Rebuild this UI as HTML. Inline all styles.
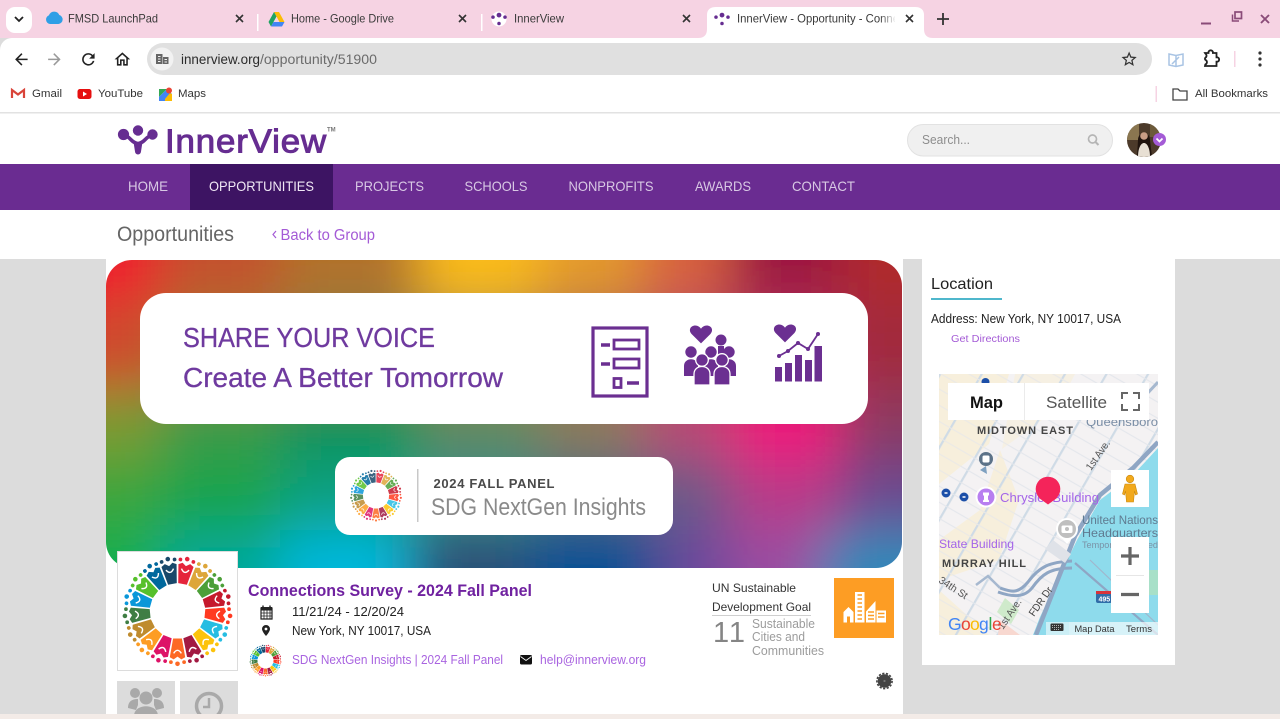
<!DOCTYPE html>
<html lang="en">
<head>
<meta charset="utf-8">
<title>InnerView - Opportunity - Connections Survey</title>
<style>
html,body{margin:0;padding:0;width:1280px;height:719px;overflow:hidden;background:#dcdcdc}
svg{display:block;font-family:"Liberation Sans",Arial,sans-serif}
</style>
</head>
<body>
<svg xmlns="http://www.w3.org/2000/svg" xmlns:xlink="http://www.w3.org/1999/xlink" width="1280" height="719" viewBox="0 0 1280 719">
<defs>
  <filter id="b1" filterUnits="userSpaceOnUse" x="0" y="150" width="1040" height="530"><feGaussianBlur stdDeviation="26"/></filter>
  <clipPath id="bannerClip"><path d="M106 286a26 26 0 0 1 26-26h744a26 26 0 0 1 26 26v256a26 26 0 0 1-26 26H132a26 26 0 0 1-26-26z"/></clipPath>
  <clipPath id="mapClip"><rect x="939" y="374" width="219" height="261"/></clipPath>
  <clipPath id="tabClip"><rect x="737" y="8" width="158" height="20"/></clipPath>
  <clipPath id="btnClip"><rect x="117" y="681" width="121" height="33"/></clipPath>
  <clipPath id="avClip"><circle cx="1144" cy="140" r="17"/></clipPath>
  <linearGradient id="fade"><stop offset="0" stop-color="#fff" stop-opacity="0"/><stop offset="1" stop-color="#fff"/></linearGradient>
  <pattern id="streets" width="14" height="36" patternUnits="userSpaceOnUse" patternTransform="translate(939 374) rotate(-60)">
    <rect width="14" height="36" fill="#f4f2f3"/>
    <path d="M0 1H14" stroke="#cfdbe6" stroke-width="2.400"/>
    <path d="M1 0V36" stroke="#e4e7ec" stroke-width="1.100"/>
  </pattern>
  <pattern id="blocks" width="14" height="36" patternUnits="userSpaceOnUse" patternTransform="translate(939 374) rotate(-60)">
    <rect width="14" height="36" fill="#f7efdc"/>
    <path d="M0 1H14" stroke="#cfdbe6" stroke-width="2.400"/>
    <path d="M1 0V36" stroke="#ebe9e6" stroke-width="1.100"/>
  </pattern>
  <g id="wedge">
    <path d="M-4-25 L4-25 L7-42 L3.500-44 L0-41.500 L-3.500-44 L-7-42Z"/>
    <path d="M-3.500-38.500Q0-33 3.500-38.500" fill="none" stroke="#fff" stroke-width="1.300"/>
    <circle cx="0" cy="-48" r="2.100"/><circle cx="-6" cy="-46.500" r="1.700"/><circle cx="6" cy="-46.500" r="1.700"/>
  </g>
  <g id="wheel">
    <use xlink:href="#wedge" href="#wedge" fill="#e5243b" transform="rotate(10.6)"/>
    <use xlink:href="#wedge" href="#wedge" fill="#dda63a" transform="rotate(31.8)"/>
    <use xlink:href="#wedge" href="#wedge" fill="#4c9f38" transform="rotate(53)"/>
    <use xlink:href="#wedge" href="#wedge" fill="#c5192d" transform="rotate(74.1)"/>
    <use xlink:href="#wedge" href="#wedge" fill="#ff3a21" transform="rotate(95.3)"/>
    <use xlink:href="#wedge" href="#wedge" fill="#26bde2" transform="rotate(116.5)"/>
    <use xlink:href="#wedge" href="#wedge" fill="#fcc30b" transform="rotate(137.6)"/>
    <use xlink:href="#wedge" href="#wedge" fill="#a21942" transform="rotate(158.8)"/>
    <use xlink:href="#wedge" href="#wedge" fill="#fd6925" transform="rotate(180)"/>
    <use xlink:href="#wedge" href="#wedge" fill="#dd1367" transform="rotate(201.2)"/>
    <use xlink:href="#wedge" href="#wedge" fill="#fd9d24" transform="rotate(222.4)"/>
    <use xlink:href="#wedge" href="#wedge" fill="#bf8b2e" transform="rotate(243.5)"/>
    <use xlink:href="#wedge" href="#wedge" fill="#3f7e44" transform="rotate(264.7)"/>
    <use xlink:href="#wedge" href="#wedge" fill="#0a97d9" transform="rotate(285.9)"/>
    <use xlink:href="#wedge" href="#wedge" fill="#56c02b" transform="rotate(307)"/>
    <use xlink:href="#wedge" href="#wedge" fill="#00689d" transform="rotate(328.2)"/>
    <use xlink:href="#wedge" href="#wedge" fill="#19486a" transform="rotate(349.4)"/>
  </g>
  <g id="ivmark" fill="#662d91">
    <circle cx="0" cy="-5.500" r="3"/><circle cx="-7.500" cy="-3" r="2.200"/><circle cx="7.500" cy="-3" r="2.200"/><circle cx="0" cy="5" r="2.200"/>
  </g>
  <path id="heart" d="M0 8 L-9-1 C-12.500-5-9.500-9-5.500-9 C-3-9-1-7.500 0-6 C1-7.500 3-9 5.500-9 C9.500-9 12.500-5 9-1Z"/>
</defs>

<!-- page background -->
<rect width="1280" height="719" fill="#dcdcdc"/>

<!-- browser tab strip -->
<rect width="1280" height="38" fill="#f6d3e3"/>
<rect x="6" y="7" width="26" height="26" rx="9" fill="#fff"/>
<path d="M15 17l4 4 4-4" fill="none" stroke="#222" stroke-width="1.800"/>
<path d="M50 24a4.500 4.500 0 0 1-1-8.700 5.500 5.500 0 0 1 10.300-.3A4.600 4.600 0 0 1 58.500 24z" fill="#2f9fe6"/>
<text x="68" y="22.500" font-size="12" fill="#3a3a3a" textLength="90" lengthAdjust="spacingAndGlyphs">FMSD LaunchPad</text>
<path d="M236 15l7 7m0-7l-7 7" stroke="#333" stroke-width="1.600"/>
<rect x="257" y="14" width="1.500" height="17" fill="#fff"/>
<path d="M274 12h5l5.500 10h-5z" fill="#fbbc04"/><path d="M274 12l-5.500 10 2.500 4.500 5.500-10z" fill="#1ea362"/><path d="M271 26.500h11l2.500-4.500h-11z" fill="#4285f4"/>
<text x="291" y="22.500" font-size="12" fill="#3a3a3a" textLength="103" lengthAdjust="spacingAndGlyphs">Home - Google Drive</text>
<path d="M459 15l7 7m0-7l-7 7" stroke="#333" stroke-width="1.600"/>
<rect x="481" y="14" width="1.500" height="17" fill="#fff"/>
<circle cx="499" cy="19" r="7.500" fill="#fff"/>
<use xlink:href="#ivmark" href="#ivmark" transform="translate(499 19.500) scale(.8)"/>
<text x="514" y="22.500" font-size="12" fill="#3a3a3a" textLength="50" lengthAdjust="spacingAndGlyphs">InnerView</text>
<path d="M683 15l7 7m0-7l-7 7" stroke="#333" stroke-width="1.600"/>

<!-- active tab -->
<path d="M698 38c6 0 9-3 9-9V15c0-6 4-8 9-8h199c6 0 9 3 9 8v14c0 6 3 9 9 9z" fill="#fff"/>
<use xlink:href="#ivmark" href="#ivmark" transform="translate(722 19.500) scale(.8)"/>
<text x="737" y="22.500" font-size="12" fill="#3a3a3a" clip-path="url(#tabClip)" textLength="162" lengthAdjust="spacingAndGlyphs">InnerView - Opportunity - Conne</text>
<rect x="880" y="8" width="16" height="20" fill="url(#fade)"/>
<path d="M906 15l7 7m0-7l-7 7" stroke="#333" stroke-width="1.600"/>
<path d="M943 13v12m-6-6h12" stroke="#333" stroke-width="1.800"/>
<!-- window controls -->
<path d="M1201 23.500h10" stroke="#8a4b78" stroke-width="2"/>
<path d="M1232.500 14.500v6.500h6.500" fill="none" stroke="#8a4b78" stroke-width="1.500"/>
<rect x="1235" y="12" width="6.500" height="6.500" fill="none" stroke="#8a4b78" stroke-width="1.700"/>
<path d="M1261 15l8 8m0-8l-8 8" stroke="#8a4b78" stroke-width="1.900"/>

<!-- toolbar -->
<path d="M0 50a12 12 0 0 1 12-12h1268v75H0z" fill="#fff"/>
<g transform="translate(12 50) scale(.78)" fill="#222"><path d="M20 11H7.830l5.590-5.590L12 4l-8 8 8 8 1.410-1.410L7.830 13H20v-2z"/></g>
<g transform="translate(45 50) scale(.78)" fill="#9a9a9a"><path d="M12 4l-1.410 1.410L16.170 11H4v2h12.170l-5.580 5.590L12 20l8-8z"/></g>
<g transform="translate(79 50) scale(.78)" fill="#222"><path d="M17.650 6.350A7.950 7.950 0 0 0 12 4a8 8 0 1 0 7.730 10h-2.080A6 6 0 1 1 12 6c1.660 0 3.140.69 4.220 1.780L13 11h7V4l-2.350 2.350z"/></g>
<g transform="translate(113 50) scale(.78)" fill="#222"><path d="M12 5.690l5 4.500V18h-2v-6H9v6H7v-7.810l5-4.500M12 3L2 12h3v8h6v-6h2v6h6v-8h3L12 3z"/></g>
<rect x="147" y="43" width="1005" height="32" rx="16" fill="#e0e0e0"/>
<circle cx="162" cy="59" r="11.500" fill="#f2f2f2"/>
<path d="M156 54h6.500v10H156zM163 57h5.500v7H163z" fill="#666"/>
<path d="M158 56.500h2.500M158 59h2.500M158 61.500h2.500M164.500 59.500h2.500M164.500 62h2.500" stroke="#f2f2f2" stroke-width="1"/>
<text x="181" y="64" font-size="13.500" fill="#2b2b2b" textLength="79" lengthAdjust="spacingAndGlyphs">innerview.org</text>
<text x="260" y="64" font-size="13.500" fill="#6b6b6b" textLength="117" lengthAdjust="spacingAndGlyphs">/opportunity/51900</text>
<g transform="translate(1120 50) scale(.76)" fill="#333"><path d="M22 9.240l-7.190-.62L12 2 9.190 8.630 2 9.240l5.460 4.730L5.820 21 12 17.270 18.180 21l-1.630-7.030L22 9.240zM12 15.400l-3.760 2.270 1-4.280-3.320-2.880 4.380-.38L12 6.100l1.710 4.040 4.380.38-3.320 2.880 1 4.280L12 15.400z"/></g>
<path d="M1169 54l7 1.500 7-1.500v11l-7 1.500-7-1.500zM1176 55.500v11M1172 64l7-7" fill="none" stroke="#a9c4e4" stroke-width="1.500"/>
<path d="M1205 53h3.500v-.5a2.200 2.200 0 0 1 4.400 0v.5h3.600v4.300h1a2.300 2.300 0 0 1 0 4.400h-1v4.300h-11.500l.3-1.500a2.500 2.500 0 0 0 0-4.700l-.3-.6v-.8l.3-.6a2.500 2.500 0 0 0 0-4.300z" fill="none" stroke="#222" stroke-width="1.800"/>
<rect x="1234" y="51" width="1.500" height="16" fill="#f6d3e3"/>
<circle cx="1260" cy="53" r="1.600" fill="#333"/><circle cx="1260" cy="59" r="1.600" fill="#333"/><circle cx="1260" cy="65" r="1.600" fill="#333"/>

<!-- bookmarks bar -->
<path d="M12 98V90l6 4.500L24 90v8" fill="none" stroke="#d9453a" stroke-width="2.200"/>
<text x="32" y="97" font-size="11" fill="#333" textLength="30" lengthAdjust="spacingAndGlyphs">Gmail</text>
<rect x="77.500" y="89" width="14" height="10" rx="2.500" fill="#e60f0f"/><path d="M83 91.500l4 2.500-4 2.500z" fill="#fff"/>
<text x="98" y="97" font-size="11" fill="#333" textLength="45" lengthAdjust="spacingAndGlyphs">YouTube</text>
<path d="M159 89h8l-8 8z" fill="#34a853"/><path d="M159 97l8-8 5 5-5 7h-8z" fill="#4285f4"/><path d="M165 99l5-6 2 1v7h-7z" fill="#fbbc04"/><circle cx="169" cy="90.500" r="3" fill="#ea4335"/>
<text x="178" y="97" font-size="11" fill="#333" textLength="28" lengthAdjust="spacingAndGlyphs">Maps</text>
<rect x="1155.500" y="86" width="1.500" height="16" fill="#f6d3e3"/>
<path d="M1173 89h5l2 2h7v9h-14z" fill="none" stroke="#444" stroke-width="1.300"/>
<text x="1195" y="97" font-size="11" fill="#333" textLength="73" lengthAdjust="spacingAndGlyphs">All Bookmarks</text>
<rect x="0" y="112" width="1280" height="1.500" fill="#e2e2e2"/>

<!-- site header -->
<rect x="0" y="113.500" width="1280" height="51" fill="#fff"/>
<g fill="#662d91">
  <circle cx="138" cy="130.500" r="5.200"/><circle cx="123.500" cy="134.500" r="5.600"/><circle cx="152.500" cy="134.500" r="5.200"/>
  <path d="M125 135.500c5 1 7 8 13 8s8-7 13-8" fill="none" stroke="#662d91" stroke-width="3.600"/>
  <path d="M133.500 142h9l-1.500 9.500a3 3 0 0 1-6 0z"/>
</g>
<text x="165" y="152.500" font-size="33" letter-spacing=".8" fill="#662d91" stroke="#662d91" stroke-width="1" textLength="162" lengthAdjust="spacingAndGlyphs">InnerView</text>
<text x="327" y="131.500" font-size="6" font-weight="700" fill="#777">TM</text>
<rect x="907.500" y="124.500" width="205" height="31.500" rx="15.700" fill="#f0f0f0" stroke="#e2e2e2"/>
<text x="922" y="144" font-size="12.500" fill="#8d8d8d" textLength="48" lengthAdjust="spacingAndGlyphs">Search...</text>
<circle cx="1092.500" cy="139" r="4" fill="none" stroke="#b5b5b5" stroke-width="1.700"/><path d="M1095.500 142l3 3" stroke="#b5b5b5" stroke-width="2"/>
<g clip-path="url(#avClip)">
  <rect x="1127" y="123" width="34" height="34" fill="#4c3a2a"/>
  <rect x="1127" y="123" width="12" height="17" fill="#8a7650"/>
  <rect x="1150" y="123" width="12" height="14" fill="#6c5a3a"/>
  <path d="M1137 157l1-17c0-9 12-9 12 0l2 17z" fill="#20140e"/>
  <circle cx="1144" cy="136" r="3.800" fill="#c99d85"/>
  <path d="M1138 157c0-9 3-14 6-14s6 5 6 14z" fill="#e8e0d4"/>
</g>
<circle cx="1159.500" cy="139.500" r="6.500" fill="#a45bd6"/>
<path d="M1156.500 138.500l3 3 3-3" fill="none" stroke="#fff" stroke-width="1.800"/>

<!-- main nav -->
<rect x="0" y="164" width="1280" height="46" fill="#6a2c91"/>
<rect x="190" y="164" width="143" height="46" fill="#3d1463"/>
<g font-size="14" fill="#d8c8e4">
  <text x="128" y="191" textLength="40" lengthAdjust="spacingAndGlyphs">HOME</text>
  <text x="209" y="191" fill="#f0e8f5" textLength="105" lengthAdjust="spacingAndGlyphs">OPPORTUNITIES</text>
  <text x="355" y="191" textLength="69" lengthAdjust="spacingAndGlyphs">PROJECTS</text>
  <text x="464.500" y="191" textLength="63" lengthAdjust="spacingAndGlyphs">SCHOOLS</text>
  <text x="568.500" y="191" textLength="85" lengthAdjust="spacingAndGlyphs">NONPROFITS</text>
  <text x="695" y="191" textLength="56" lengthAdjust="spacingAndGlyphs">AWARDS</text>
  <text x="792" y="191" textLength="63" lengthAdjust="spacingAndGlyphs">CONTACT</text>
</g>

<!-- page title bar -->
<rect x="0" y="210" width="1280" height="49" fill="#fff"/>
<text x="117" y="241" font-size="21" fill="#666" textLength="117" lengthAdjust="spacingAndGlyphs">Opportunities</text>
<path d="M276 231l-3 3.500 3 3.500" fill="none" stroke="#a45bd6" stroke-width="1.200"/>
<text x="280.500" y="240" font-size="15.500" fill="#a45bd6" textLength="94.500" lengthAdjust="spacingAndGlyphs">Back to Group</text>

<!-- main column -->
<rect x="106" y="259" width="797" height="455" fill="#fff"/>

<!-- banner -->
<g clip-path="url(#bannerClip)">
  <g filter="url(#b1)" shape-rendering="crispEdges">
    <!-- row 1 -->
    <rect x="0" y="180" width="160" height="120" fill="#f01a2e"/>
    <rect x="160" y="180" width="120" height="120" fill="#c4512e"/>
    <rect x="280" y="180" width="140" height="120" fill="#b2722c"/>
    <rect x="420" y="180" width="120" height="120" fill="#fcbc14"/>
    <rect x="540" y="180" width="100" height="120" fill="#e49a2c"/>
    <rect x="640" y="180" width="90" height="120" fill="#d8623e"/>
    <rect x="730" y="180" width="110" height="120" fill="#9c1640"/>
    <rect x="840" y="180" width="200" height="120" fill="#b02a2c"/>
    <!-- row 2 -->
    <rect x="0" y="300" width="160" height="90" fill="#cf4a2e"/>
    <rect x="160" y="300" width="120" height="90" fill="#a8702e"/>
    <rect x="280" y="300" width="140" height="90" fill="#8a7a40"/>
    <rect x="420" y="300" width="120" height="90" fill="#b09040"/>
    <rect x="540" y="300" width="100" height="90" fill="#b0704a"/>
    <rect x="640" y="300" width="90" height="90" fill="#b85060"/>
    <rect x="730" y="300" width="110" height="90" fill="#b0305a"/>
    <rect x="840" y="300" width="200" height="90" fill="#a22c3c"/>
    <!-- row 3 -->
    <rect x="0" y="390" width="160" height="70" fill="#7c9a30"/>
    <rect x="160" y="390" width="120" height="70" fill="#3a9a48"/>
    <rect x="280" y="390" width="140" height="70" fill="#109258"/>
    <rect x="420" y="390" width="120" height="70" fill="#5f8a60"/>
    <rect x="540" y="390" width="100" height="70" fill="#8b7b5c"/>
    <rect x="640" y="390" width="90" height="70" fill="#b84a74"/>
    <rect x="730" y="390" width="110" height="70" fill="#f0147c"/>
    <rect x="840" y="390" width="200" height="70" fill="#8c3a62"/>
    <!-- row 4 -->
    <rect x="0" y="460" width="160" height="70" fill="#3aa63e"/>
    <rect x="160" y="460" width="120" height="70" fill="#18a44c"/>
    <rect x="280" y="460" width="140" height="70" fill="#10a080"/>
    <rect x="420" y="460" width="120" height="70" fill="#3a8a88"/>
    <rect x="540" y="460" width="100" height="70" fill="#4c6a80"/>
    <rect x="640" y="460" width="90" height="70" fill="#6c5a88"/>
    <rect x="730" y="460" width="110" height="70" fill="#b83a88"/>
    <rect x="840" y="460" width="200" height="70" fill="#6a4a90"/>
    <!-- row 5 -->
    <rect x="0" y="530" width="160" height="130" fill="#0cae50"/>
    <rect x="160" y="530" width="120" height="130" fill="#00a898"/>
    <rect x="280" y="530" width="130" height="130" fill="#00b8dc"/>
    <rect x="410" y="530" width="120" height="130" fill="#2a4f78"/>
    <rect x="530" y="530" width="130" height="130" fill="#004f94"/>
    <rect x="660" y="530" width="70" height="130" fill="#6a4a9c"/>
    <rect x="730" y="530" width="90" height="130" fill="#9a4ea2"/>
    <rect x="820" y="530" width="220" height="130" fill="#2f88ba"/>
  </g>
</g>
<rect x="140" y="293" width="728" height="131" rx="26" fill="#fff"/>
<text x="183" y="347" font-size="27.500" fill="#6f3a9f" stroke="#6f3a9f" stroke-width=".3" textLength="252" lengthAdjust="spacingAndGlyphs">SHARE YOUR VOICE</text>
<text x="183" y="387" font-size="27.500" fill="#6f3a9f" stroke="#6f3a9f" stroke-width=".3" textLength="320" lengthAdjust="spacingAndGlyphs">Create A Better Tomorrow</text>

<!-- form icon -->
<g fill="none" stroke="#6b2f91" stroke-width="2.800">
  <rect x="593" y="328" width="54" height="68" stroke-width="3.200"/>
  <rect x="614" y="340" width="25" height="9"/>
  <rect x="614" y="359" width="25" height="9"/>
  <rect x="614" y="378.500" width="7" height="9"/>
  <path d="M601 345h9M601 364h9M627 383h12" stroke-width="3.500"/>
</g>
<!-- people icon -->
<g fill="#6b2f91">
  <use xlink:href="#heart" href="#heart" transform="translate(701 335) scale(1.050)"/>
  <circle cx="721" cy="340" r="5.500"/><path d="M718 346h6v14h-6z"/>
  <circle cx="691" cy="352" r="5.700"/><path d="M684 376v-10c0-9 14-9 14 0v10z"/>
  <circle cx="711" cy="352" r="5.700"/><path d="M704 376v-10c0-9 14-9 14 0v10z"/>
  <circle cx="729" cy="352" r="5.700"/><path d="M722 376v-10c0-9 14-9 14 0v10z"/>
  <g stroke="#fff" stroke-width="1.300">
    <circle cx="702" cy="360" r="6.300"/><path d="M694 385v-11c0-10 16-10 16 0v11z"/>
    <circle cx="722" cy="360" r="6.300"/><path d="M714 385v-11c0-10 16-10 16 0v11z"/>
  </g>
</g>
<!-- chart icon -->
<g fill="#6b2f91">
  <use xlink:href="#heart" href="#heart" transform="translate(785 334) scale(1.050)"/>
  <rect x="775" y="367" width="7" height="14.500"/><rect x="785" y="363" width="7" height="18.500"/><rect x="795" y="355" width="7" height="26.500"/><rect x="805" y="360" width="7" height="21.500"/><rect x="814.500" y="346" width="7.500" height="35.500"/>
  <path d="M779 356l9-5 10-8 10 6 10-15" fill="none" stroke="#6b2f91" stroke-width="1.800"/>
  <circle cx="779" cy="356" r="2"/><circle cx="788" cy="351" r="2"/><circle cx="798" cy="343" r="2"/><circle cx="808" cy="349" r="2"/><circle cx="818" cy="334" r="2"/>
</g>

<!-- panel pill -->
<rect x="335" y="457" width="338" height="78" rx="15" fill="#fff"/>
<use xlink:href="#wheel" href="#wheel" transform="translate(376 495.500) scale(.52)" opacity=".85"/>
<rect x="417" y="469" width="1.500" height="53" fill="#c8c8c8"/>
<text x="433.500" y="488" font-size="13" font-weight="700" fill="#4a4a4a" textLength="121" lengthAdjust="spacing">2024 FALL PANEL</text>
<text x="431" y="515" font-size="24" fill="#8a8a8a" textLength="215" lengthAdjust="spacingAndGlyphs">SDG NextGen Insights</text>

<!-- event logo -->
<rect x="117.500" y="551.500" width="120" height="119" fill="#fff" stroke="#dcdcdc"/>
<use xlink:href="#wheel" href="#wheel" transform="translate(177.500 611) scale(1.100)"/>

<!-- action buttons -->
<g clip-path="url(#btnClip)">
  <rect x="117" y="681" width="58" height="33" fill="#dcdcdc"/>
  <rect x="180" y="681" width="58" height="33" fill="#dcdcdc"/>
  <g fill="#a9a9a9">
    <circle cx="135" cy="693" r="5"/><circle cx="157" cy="693" r="5"/><circle cx="146" cy="698" r="6.500"/>
    <path d="M128 708c0-8 6-9 10-9v6l-2 5zM164 708c0-8-6-9-10-9v6l2 5z"/>
    <path d="M134 716c0-13 24-13 24 0z"/>
  </g>
  <circle cx="209" cy="706" r="12.500" fill="none" stroke="#a9a9a9" stroke-width="3.500"/>
  <path d="M209 698v9h-6" fill="none" stroke="#a9a9a9" stroke-width="2.500"/>
</g>

<!-- event details -->
<text x="248" y="596" font-size="16.500" font-weight="700" fill="#7022a0" textLength="284" lengthAdjust="spacingAndGlyphs">Connections Survey - 2024 Fall Panel</text>
<g fill="#222">
  <path d="M261 608h11v11h-11z" fill="none" stroke="#222" stroke-width="1.200"/>
  <rect x="261" y="607" width="11" height="3.500"/>
  <path d="M263 605.500v3M270 605.500v3" stroke="#222" stroke-width="1.400"/>
  <path d="M261 613h11M261 616h11M264 610v9M267 610v9M270 610v9" stroke="#222" stroke-width=".8"/>
  <path fill-rule="evenodd" d="M266 625a4 4 0 0 1 4 4c0 2.500-4 7-4 7s-4-4.500-4-7a4 4 0 0 1 4-4zm0 2.600a1.400 1.400 0 1 0 0 2.800 1.400 1.400 0 0 0 0-2.800z"/>
</g>
<text x="292" y="616" font-size="12.500" fill="#222" textLength="112" lengthAdjust="spacingAndGlyphs">11/21/24 - 12/20/24</text>
<text x="292" y="635" font-size="12.500" fill="#222" textLength="139" lengthAdjust="spacingAndGlyphs">New York, NY 10017, USA</text>
<use xlink:href="#wheel" href="#wheel" transform="translate(265.500 660.500) scale(.32)"/>
<text x="292" y="664" font-size="12.500" fill="#a964e0" textLength="211" lengthAdjust="spacingAndGlyphs">SDG NextGen Insights | 2024 Fall Panel</text>
<rect x="520" y="655" width="12" height="9.500" rx="1.500" fill="#111"/>
<path d="M520.500 656.500l5.500 4 5.500-4" fill="none" stroke="#fff" stroke-width=".9"/>
<text x="540" y="664" font-size="12.500" fill="#a964e0" textLength="106" lengthAdjust="spacingAndGlyphs">help@innerview.org</text>

<!-- UN goal -->
<text x="712" y="592" font-size="12" fill="#333" textLength="84" lengthAdjust="spacingAndGlyphs">UN Sustainable</text>
<text x="712" y="611" font-size="12" fill="#333" textLength="99" lengthAdjust="spacingAndGlyphs">Development Goal</text>
<rect x="712" y="615" width="99" height="1" fill="#cfcfcf"/>
<text x="713" y="642" font-size="29" fill="#858585" textLength="32" lengthAdjust="spacing">11</text>
<g font-size="12.500" fill="#9c9c9c">
  <text x="752" y="628" textLength="63" lengthAdjust="spacingAndGlyphs">Sustainable</text>
  <text x="752" y="641" textLength="53" lengthAdjust="spacingAndGlyphs">Cities and</text>
  <text x="752" y="655" textLength="72" lengthAdjust="spacingAndGlyphs">Communities</text>
</g>
<rect x="834" y="578" width="60" height="60" fill="#fd9d24"/>
<g fill="#fff">
  <path d="M843.500 622.500v-10.500l5-5 5 5v10.500h-3.500v-6h-3v6z"/>
  <rect x="855" y="592" width="9.500" height="30.500"/>
  <path d="M866 622.500v-11l9.500-10.500v21.500z"/>
  <rect x="876.500" y="610.500" width="9.500" height="12"/>
</g>
<path d="M857.500 595h4.500M857.500 599h4.500M857.500 603h4.500M857.500 607h4.500M857.500 611h4.500M857.500 615h4.500M857.500 619h4.500M868 612h6M868 615.500h6M868 619h6M878 613.500h6.500M878 617h6.500" stroke="#fd9d24" stroke-width="1.500"/>
<!-- gear -->
<circle cx="884.500" cy="681" r="6.800" fill="#444"/>
<circle cx="884.500" cy="681" r="7.600" fill="none" stroke="#444" stroke-width="1.600" stroke-dasharray="2.200 1.500"/>
<circle cx="884.500" cy="681" r="1.100" fill="#777"/>

<!-- sidebar -->
<rect x="922" y="259" width="253" height="406" fill="#fff"/>
<text x="931" y="289" font-size="16" fill="#222" textLength="62" lengthAdjust="spacingAndGlyphs">Location</text>
<rect x="931" y="298" width="71" height="2" fill="#4fb7cc"/>
<text x="931" y="323" font-size="12.500" fill="#222" textLength="190" lengthAdjust="spacingAndGlyphs">Address: New York, NY 10017, USA</text>
<text x="951" y="342" font-size="10.500" fill="#a45bd6" textLength="69" lengthAdjust="spacingAndGlyphs">Get Directions</text>

<!-- map -->
<g clip-path="url(#mapClip)">
  <rect x="939" y="374" width="219" height="261" fill="url(#streets)"/>
  <path d="M939 374h70l-20 70-50 40zM1000 450l-20 60-41 30v40l60-20 20-60z" fill="url(#blocks)"/>
  <path d="M1015 374h60l-18 35-55 40z" fill="url(#blocks)" opacity=".7"/>
  <path d="M939 590l50 45h-50z" fill="url(#blocks)"/>
  <path d="M1158 448L1133 475L1100 500L1077 540L1040 617L1033 635H1158z" fill="#8edbec"/>
  <path d="M1158 442L1133 468L1100 495L1075 536L1036 635" fill="none" stroke="#8fa6c4" stroke-width="4.500"/>
  <path d="M1158 382L1130 412" fill="none" stroke="#a6b8cf" stroke-width="3"/>
  <path d="M1072 561C1050 562 1040 566 1028 582C1018 594 1012 592 1000 588" fill="none" stroke="#8fa6c4" stroke-width="3"/>
  <path d="M1072 568C1050 568 1042 574 1032 588C1024 598 1012 597 998 592" fill="none" stroke="#8fa6c4" stroke-width="3"/>
  <path d="M1000 588l-12-12-12 9" fill="none" stroke="#a6b8cf" stroke-width="2.500"/>
  <path d="M1075 563L1158 635" fill="none" stroke="#8fa6c4" stroke-width="2.200"/>
  <path d="M1090 560L1158 625" fill="none" stroke="#a0b6cc" stroke-width="1.200"/>
  <path d="M1005 598l14 12-8 14-14-12z" fill="#cfeacb"/>
  <path d="M1053 540l18 14-6 9-20-14z" fill="#dfe2e8"/>
  <path d="M1000 620l20 15h-22z" fill="#f8d8d0"/>
  <path d="M1145 570h13v25h-13z" fill="#a8e0c8"/>

  <text x="977" y="434" font-size="11" font-weight="700" fill="#444" textLength="96" lengthAdjust="spacing">MIDTOWN EAST</text>
  <text x="1086" y="426" font-size="12" fill="#7a8ea6" textLength="72" lengthAdjust="spacingAndGlyphs">Queensboro</text>
  <text transform="translate(1091 471) rotate(-55)" font-size="10.500" fill="#555" textLength="34" lengthAdjust="spacingAndGlyphs">1st Ave.</text>
  <text x="939" y="548" font-size="12" fill="#a464e8" textLength="75" lengthAdjust="spacingAndGlyphs">State Building</text>
  <text x="942" y="567" font-size="11" font-weight="700" fill="#444" textLength="84" lengthAdjust="spacing">MURRAY HILL</text>
  <text transform="translate(938 582) rotate(33)" font-size="10.500" fill="#555" textLength="32" lengthAdjust="spacingAndGlyphs">34th St</text>
  <text transform="translate(1003 630) rotate(-56)" font-size="10.500" fill="#555" textLength="34" lengthAdjust="spacingAndGlyphs">1st Ave.</text>
  <text transform="translate(1034 617) rotate(-55)" font-size="10.500" fill="#444" textLength="33" lengthAdjust="spacingAndGlyphs">FDR Dr</text>
  <text x="1082" y="524" font-size="12" fill="#5f7a90" textLength="76" lengthAdjust="spacingAndGlyphs">United Nations</text>
  <text x="1082" y="537" font-size="12" fill="#5f7a90" textLength="76" lengthAdjust="spacingAndGlyphs">Headquarters</text>
  <text x="1082" y="548" font-size="9.500" fill="#7a92a6" textLength="76" lengthAdjust="spacingAndGlyphs">Temporarily closed</text>
  <text x="1000" y="502" font-size="13" fill="#a464e8" textLength="99" lengthAdjust="spacingAndGlyphs">Chrysler Building</text>

  <rect x="1096" y="591" width="16" height="12" rx="2" fill="#2f6ca8"/>
  <rect x="1096" y="591" width="16" height="3" fill="#d8333a"/>
  <text x="1098.500" y="601.500" font-size="7" font-weight="700" fill="#fff">495</text>

  <!-- map pois -->
  <circle cx="986" cy="459" r="7" fill="#5c7288"/><rect x="982.500" y="455.500" width="7" height="7" rx="1.500" fill="#fff"/>
  <path d="M980 470l6-4 1 8z" fill="#7ea0c0"/>
  <circle cx="985.500" cy="382" r="4" fill="#1c4fa8"/>
  <circle cx="946" cy="493" r="4.500" fill="#1c4fa8"/><circle cx="964" cy="497" r="4.500" fill="#1c4fa8"/>
  <path d="M944.500 493h3M962.500 497h3" stroke="#fff" stroke-width="1.500"/>
  <circle cx="986" cy="497" r="10.500" fill="#fff"/><circle cx="986" cy="497" r="8.500" fill="#b87ff0"/>
  <path d="M983 502h6v-1.500l-1-1v-4h1v-3h-6v3h1v4l-1 1z" fill="#fff"/>
  <circle cx="1067" cy="529" r="11" fill="#fff"/><path d="M1061 537l6 7 6-7z" fill="#fff"/>
  <circle cx="1067" cy="529" r="9" fill="#bfbfbf"/>
  <rect x="1061.500" y="525.500" width="11" height="7.500" rx="1.500" fill="#fff"/><circle cx="1067" cy="529" r="2" fill="#bfbfbf"/>

  <!-- pin -->
  <circle cx="1048" cy="489" r="12.300" fill="#f4245a"/>
  <path d="M1039 498l9 6.500 9-6.500z" fill="#f4245a"/>

  <!-- google logo -->
  <g font-size="17.500">
    <text x="948" y="630" fill="#4285f4">G</text>
    <text x="961" y="630" fill="#ea4335">o</text>
    <text x="970" y="630" fill="#fbbc04">o</text>
    <text x="979" y="630" fill="#4285f4">g</text>
    <text x="988.500" y="630" fill="#34a853">l</text>
    <text x="992" y="630" fill="#ea4335">e</text>
  </g>

  <!-- map footer -->
  <rect x="1046" y="622" width="23" height="13" fill="#fff" fill-opacity=".55"/>
  <rect x="1069" y="622" width="89" height="13" fill="#fff" fill-opacity=".65"/>
  <rect x="1050.500" y="623.500" width="13" height="7.500" rx="1" fill="#333"/>
  <path d="M1052 625.500h10M1052 627.500h10M1054 629.500h6" stroke="#ddd" stroke-width=".8" stroke-dasharray="1 1"/>
  <text x="1074.500" y="632" font-size="9.500" fill="#333" textLength="40" lengthAdjust="spacingAndGlyphs">Map Data</text>
  <text x="1126" y="632" font-size="9.500" fill="#333" textLength="26" lengthAdjust="spacingAndGlyphs">Terms</text>
</g>

<!-- map controls -->
<rect x="948" y="383" width="163" height="37" fill="#fff"/>
<rect x="1111" y="383" width="38" height="37" fill="#fff"/>
<rect x="1024" y="383" width="1" height="37" fill="#ebebeb"/>
<text x="970" y="408" font-size="17" font-weight="700" fill="#111" textLength="33" lengthAdjust="spacingAndGlyphs">Map</text>
<text x="1046" y="408" font-size="17" fill="#565656" textLength="61" lengthAdjust="spacingAndGlyphs">Satellite</text>
<path d="M1122 399v-6h6M1133 393h6v6M1139 404v6h-6M1128 410h-6v-6" fill="none" stroke="#666" stroke-width="2"/>
<rect x="1111" y="470" width="38" height="37" fill="#fff"/>
<g fill="#f2a91c" stroke="#c98a10" stroke-width=".6">
  <circle cx="1130" cy="479" r="3.800"/>
  <path d="M1125 484h10l2.500 10-2 1-1-4-1 11h-7l-1-11-1 4-2-1z"/>
</g>
<rect x="1111" y="537" width="38" height="76" fill="#fff"/>
<rect x="1116" y="575" width="28" height="1" fill="#e6e6e6"/>
<path d="M1121 556h18M1130 547v18" stroke="#666" stroke-width="3.200"/>
<path d="M1121 594.500h18" stroke="#666" stroke-width="3.200"/>

<!-- bottom strip -->
<rect x="0" y="714" width="1280" height="5" fill="#f3ebe7"/>
</svg>
</body>
</html>
